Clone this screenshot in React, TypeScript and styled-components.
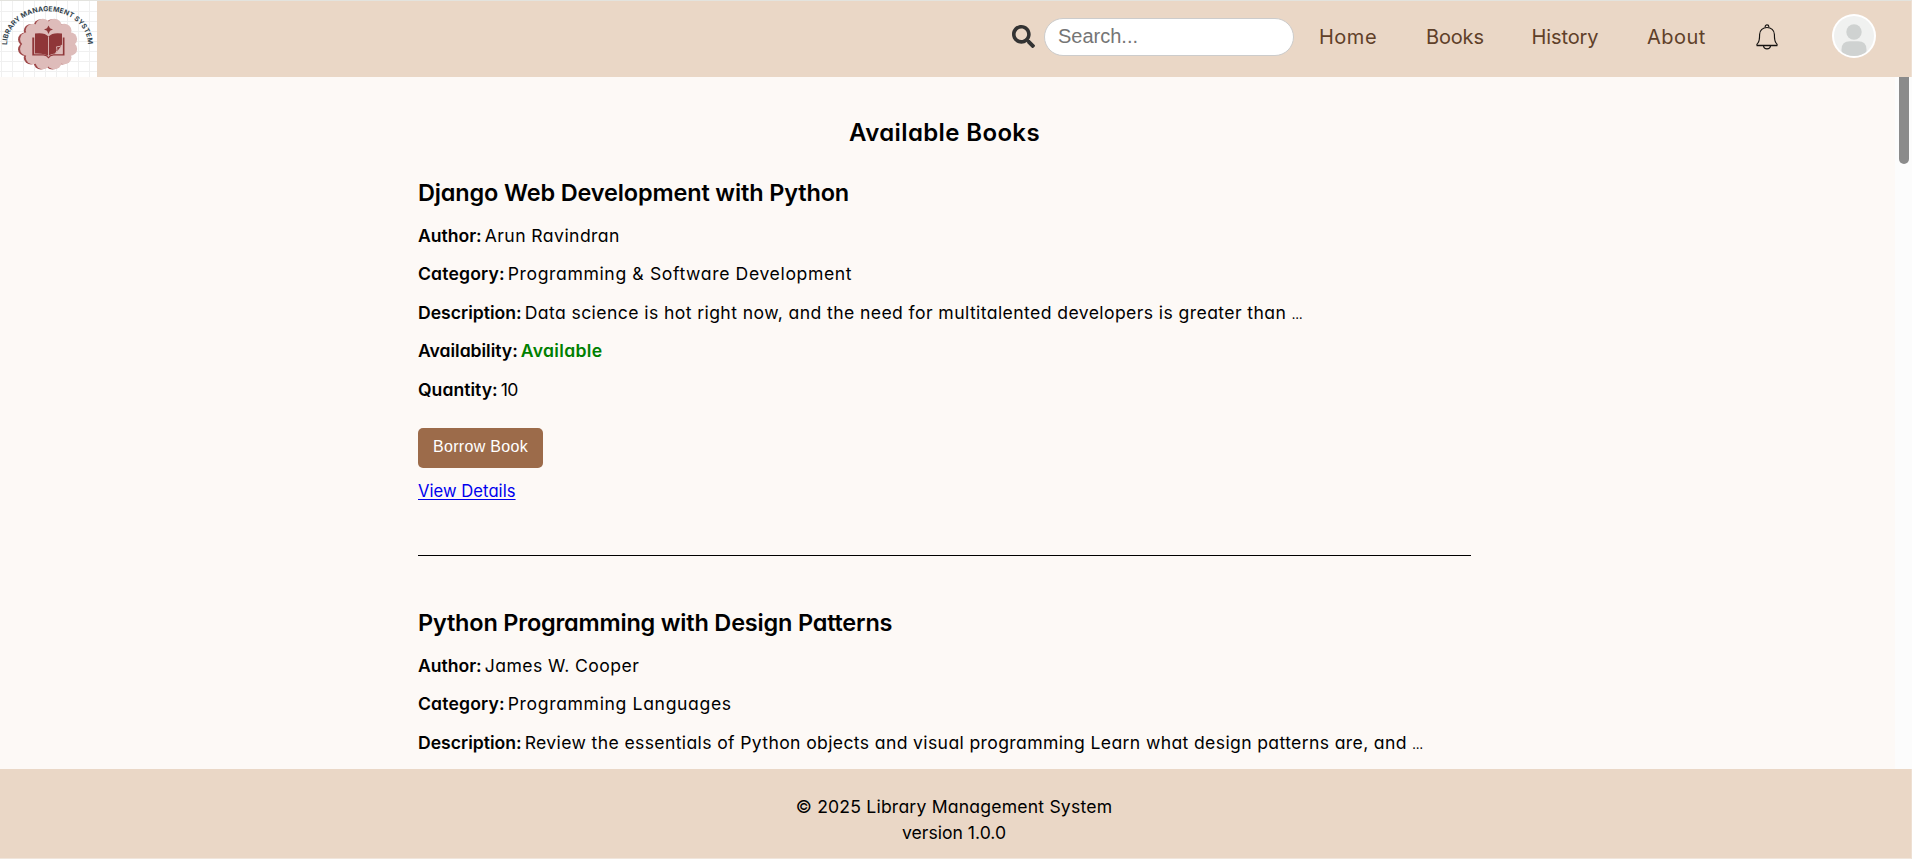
import React from "react";
import styled, { createGlobalStyle } from "styled-components";
import { FaSearch } from "react-icons/fa";

const GlobalStyle = createGlobalStyle`
  *, *::before, *::after { box-sizing: border-box; }
  body {
    margin: 0;
    overflow: hidden;
    background: #fdf9f6;
    color: #000;
    font-family: Inter, "Liberation Sans", sans-serif;
    font-feature-settings: "cv11";
  }
  h2, h3, p { margin: 0; }
`;

const Page = styled.div`
  display: flex;
  flex-direction: column;
  height: 859px;
`;

const Header = styled.header`
  display: flex;
  align-items: flex-start;
  flex: 0 0 77px;
  border-top: 1px solid #e3e3de;
  border-right: 1px solid #eee0d3;
  background: #ead7c6;
`;

const LogoSvg = styled.svg`
  display: block;
  width: 97px;
  height: 76px;
`;

const HeaderTools = styled.div`
  display: flex;
  align-items: center;
  height: 72px;
  margin: -1px 35px 0 auto;
`;

const SearchIcon = styled(FaSearch)`
  width: 23px;
  height: 23px;
  margin-right: 9px;
  color: #333;
`;

const SearchInput = styled.input`
  width: 250px;
  height: 38px;
  margin: 2px 25px 0 0;
  padding: 0 13px 2px;
  border: 1px solid #ccc;
  border-radius: 19px;
  background: #fff;
  font: 20px "Liberation Sans", sans-serif;
  &::placeholder { color: #757575; }
`;

const NavLink = styled.a<{ $width: number; $spacing: number }>`
  width: ${(p) => p.$width}px;
  margin-top: 1px;
  color: #5f4029;
  font-size: 20px;
  line-height: 28px;
  letter-spacing: ${(p) => p.$spacing}px;
  white-space: nowrap;
  text-decoration: none;
`;

const BellSvg = styled.svg`
  width: 22px;
  height: 26px;
  margin: 1px 54px 0 0;
`;

const AvatarSvg = styled.svg`
  width: 44px;
  height: 44px;
`;

const Body = styled.div`
  display: flex;
  flex: 1 1 0;
  min-height: 0;
`;

const Content = styled.main`
  flex: 1 1 0;
  padding: 38px 0 0 418px;
  overflow: hidden;
`;

const ScrollTrack = styled.div`
  flex: 0 0 17px;
  padding-left: 4px;
  background: #fcfcfc;
`;

const ScrollThumb = styled.div`
  width: 10px;
  height: 87px;
  border-radius: 0 0 5px 5px;
  background: #8b8b8b;
`;

const PageTitle = styled.h2`
  width: 1053px;
  height: 60px;
  font-size: 24px;
  font-weight: 600;
  line-height: 35px;
  letter-spacing: 0.37px;
  text-align: center;
`;

const Card = styled.article`
  width: 1053px;
  height: 381px;
  margin-bottom: 48.8px;
  border-bottom: 1px solid #000;
`;

const BookTitle = styled.h3<{ $spacing: number }>`
  height: 42px;
  font-size: 23.5px;
  font-weight: 600;
  line-height: 36px;
  letter-spacing: ${(p) => p.$spacing}px;
`;

const Field = styled.p`
  display: flex;
  height: 38.4px;
  font-size: 17.6px;
  line-height: 38px;
  white-space: nowrap;
`;

const Label = styled.strong<{ $spacing: number }>`
  margin-right: 3px;
  font-weight: 600;
  letter-spacing: ${(p) => p.$spacing}px;
`;

const Value = styled.span<{ $spacing: number }>`
  letter-spacing: ${(p) => p.$spacing}px;
`;

const Ellipsis = styled.span`
  font-size: 12.5px;
  letter-spacing: 0;
`;

const Status = styled(Value)`
  color: #008000;
  font-weight: 600;
`;

const BorrowButton = styled.button`
  display: block;
  width: 125px;
  height: 40px;
  margin-top: 19px;
  padding: 0 0 1px;
  border: 0;
  border-radius: 5px;
  background: #9c6b4a;
  color: #fff;
  font: 16px "Liberation Sans", sans-serif;
  letter-spacing: 0.3px;
`;

const DetailsLink = styled.a`
  display: inline-block;
  margin-top: 10px;
  color: #0000ee;
  font-size: 16.6px;
  line-height: 26px;
  letter-spacing: 0.05px;
  text-decoration: underline;
  text-decoration-thickness: 1px;
  text-underline-offset: 2px;
`;

const Footer = styled.footer`
  flex: 0 0 90px;
  padding: 25px 3px 0 0;
  border-right: 1px solid #eee0d3;
  border-bottom: 1px solid #f1e6dc;
  background: #ead7c6;
  font-size: 17.6px;
  line-height: 26px;
  text-align: center;
`;

const FooterLine = styled.p<{ $spacing: number }>`
  letter-spacing: ${(p) => p.$spacing}px;
`;

const lobes = Array.from({ length: 12 }, (_, i) => {
  const angle = ((i + 0.5) * Math.PI) / 6;
  return { x: 48 + 22 * Math.cos(angle), y: 43 + 19 * Math.sin(angle) };
});

function Scallop({ color, dx, dy }: { color: string; dx: number; dy: number }) {
  return (
    <g fill={color} transform={`translate(${dx} ${dy})`}>
      <ellipse cx="48" cy="43" rx="24" ry="21" />
      {lobes.map((l, i) => (
        <ellipse key={i} cx={l.x} cy={l.y} rx="7.3" ry="6.8" />
      ))}
    </g>
  );
}

function Logo() {
  return (
    <LogoSvg viewBox="0 0 97 76" role="img" aria-label="Library Management System">
      <rect width="97" height="76" fill="#fff" />
      <g stroke="#f0f0f0" strokeWidth="1">
        {[1, 12, 23, 34, 45, 56, 67, 78, 89].map((x) => (
          <line key={x} x1={x + 0.5} x2={x + 0.5} y1="0" y2="76" />
        ))}
        {[10, 20, 30, 40, 50, 60, 70].map((y) => (
          <line key={y} x1="0" x2="97" y1={y + 0.5} y2={y + 0.5} />
        ))}
      </g>
      <Scallop color="#a04a4b" dx={-1.4} dy={0.3} />
      <Scallop color="#debcba" dx={0.6} dy={0} />
      <path d="M48.5 24.500 50 27.200 53 28.500 50 29.800 48.500 33 47 29.800 44 28.500 47 27.200Z" fill="#8f3638" />
      <path d="M32.300 36.500H34.200V53.300H43.500Q47 53.600 48.500 56Q50 53.600 53.500 53.300H62.800V36.500H64.500V54.600H53.500Q50.500 54.800 48.500 57.500Q46.500 54.800 43.500 54.600H32.300Z" fill="#8f3638" />
      <path d="M35 32.500Q44.500 31 48.500 35.500Q52.500 31 62 32.500V44L55.500 52.500Q51 52.300 48.500 55Q44.500 52 35 52.500Z" fill="#8f3638" />
      <path d="M48.500 35.500V55M62 44Q61 45.800 56.500 45.800Q58 50 55.500 52.500M62 44V52.500H55.500" fill="none" stroke="#debcba" strokeWidth=".9" />
      <path id="logo-arc" d="M7 44A40.500 33.800 0 0 1 88 44" fill="none" />
      <text fill="#34454e" fontFamily="Inter, sans-serif" fontSize="6.900" fontWeight="700">
        <textPath href="#logo-arc" textLength="116" lengthAdjust="spacing">
          LIBRARY MANAGEMENT SYSTEM
        </textPath>
      </text>
    </LogoSvg>
  );
}

function Bell() {
  return (
    <BellSvg viewBox="0 0 22 26" fill="none" stroke="#151210" strokeWidth="1.15">
      <path d="M9.200 3.300V2.600A1.800 1.800 0 0 1 12.800 2.600V3.300" />
      <path d="M1 21.200C.6 20.200 1.200 19.600 2 18.900C3.600 17 3.600 13.500 3.600 10.500C3.600 6 7 3.500 11 3.500S18.400 6 18.400 10.500C18.400 13.500 18.400 17 20 18.900C20.800 19.600 21.400 20.200 21 21.200" />
      <path d="M.6 21.500H21.400" strokeWidth="1.500" />
      <path d="M7.500 22C8 25.800 14 25.800 14.500 22" />
    </BellSvg>
  );
}

function Avatar() {
  return (
    <AvatarSvg viewBox="0 0 44 44">
      <clipPath id="avatar-clip">
        <circle cx="22" cy="22" r="20" />
      </clipPath>
      <circle cx="22" cy="22" r="22" fill="#fff" />
      <circle cx="22" cy="22" r="20" fill="#f0f1f0" />
      <g fill="#cfd2d1" clipPath="url(#avatar-clip)">
        <circle cx="22" cy="18" r="7.700" />
        <path d="M9.500 44V35.500Q9.500 27.300 18 27.300H26Q34.500 27.300 34.500 35.500V44Z" />
      </g>
    </AvatarSvg>
  );
}

type Fitted = { text: string; spacing: number };
type Book = {
  title: Fitted;
  author: Fitted;
  category: Fitted;
  description: Fitted;
  quantity?: number;
};

const books: Book[] = [
  {
    title: { text: "Django Web Development with Python", spacing: -0.15 },
    author: { text: "Arun Ravindran", spacing: 0.43 },
    category: { text: "Programming & Software Development", spacing: 0.62 },
    description: {
      text: "Data science is hot right now, and the need for multitalented developers is greater than ",
      spacing: 0.405,
    },
    quantity: 10,
  },
  {
    title: { text: "Python Programming with Design Patterns", spacing: -0.2 },
    author: { text: "James W. Cooper", spacing: 0.44 },
    category: { text: "Programming Languages", spacing: 0.64 },
    description: {
      text: "Review the essentials of Python objects and visual programming Learn what design patterns are, and ",
      spacing: 0.36,
    },
  },
];

const links = [
  { text: "Home", spacing: 0.5, width: 107 },
  { text: "Books", spacing: -0.15, width: 105.5 },
  { text: "History", spacing: -0.11, width: 115.5 },
  { text: "About", spacing: 0.45, width: 109 },
];

function Stock({ quantity }: { quantity: number }) {
  return (
    <>
      <Field>
        <Label $spacing={-0.03}>Availability:</Label>
        <Status $spacing={0.32}>Available</Status>
      </Field>
      <Field>
        <Label $spacing={0.02}>Quantity:</Label>
        <Value $spacing={-0.6}>{quantity}</Value>
      </Field>
      <BorrowButton>Borrow Book</BorrowButton>
      <DetailsLink href="#">View Details</DetailsLink>
    </>
  );
}

function BookCard({ book }: { book: Book }) {
  return (
    <Card>
      <BookTitle $spacing={book.title.spacing}>{book.title.text}</BookTitle>
      <Field>
        <Label $spacing={-0.03}>Author:</Label>
        <Value $spacing={book.author.spacing}>{book.author.text}</Value>
      </Field>
      <Field>
        <Label $spacing={0.15}>Category:</Label>
        <Value $spacing={book.category.spacing}>{book.category.text}</Value>
      </Field>
      <Field>
        <Label $spacing={0}>Description:</Label>
        <Value $spacing={book.description.spacing}>
          {book.description.text}
          <Ellipsis>…</Ellipsis>
        </Value>
      </Field>
      {book.quantity !== undefined && <Stock quantity={book.quantity} />}
    </Card>
  );
}

export default function App() {
  return (
    <Page>
      <GlobalStyle />
      <Header>
        <Logo />
        <HeaderTools>
          <SearchIcon />
          <SearchInput placeholder="Search..." />
          {links.map((l) => (
            <NavLink key={l.text} href="#" $width={l.width} $spacing={l.spacing}>
              {l.text}
            </NavLink>
          ))}
          <Bell />
          <Avatar />
        </HeaderTools>
      </Header>
      <Body>
        <Content>
          <PageTitle>Available Books</PageTitle>
          {books.map((b) => (
            <BookCard key={b.title.text} book={b} />
          ))}
        </Content>
        <ScrollTrack>
          <ScrollThumb />
        </ScrollTrack>
      </Body>
      <Footer>
        <FooterLine $spacing={0.19}>© 2025 Library Management System</FooterLine>
        <FooterLine $spacing={0}>version 1.0.0</FooterLine>
      </Footer>
    </Page>
  );
}
